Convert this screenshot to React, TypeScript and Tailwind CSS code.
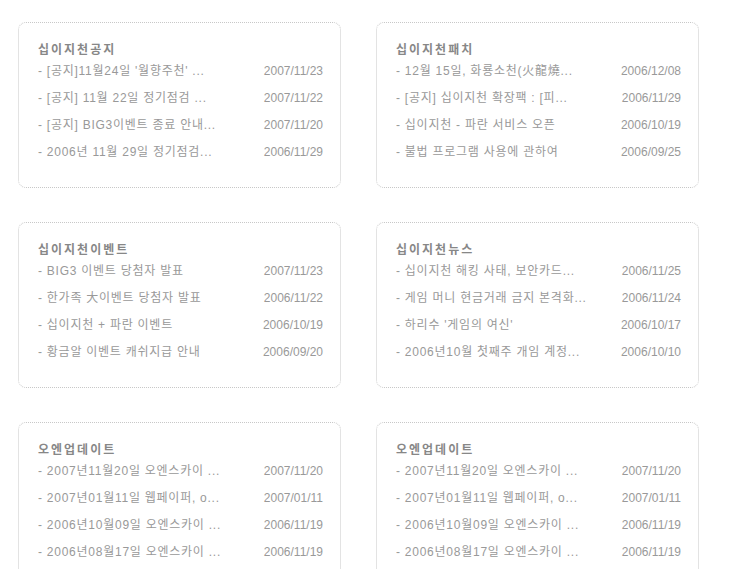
const boxes = [
  {
    title: "십이지천공지",
    items: [
      ["- [공지]11월24일 '월향주천' ...", "2007/11/23"],
      ["- [공지] 11월 22일 정기점검 ...", "2007/11/22"],
      ["- [공지] BIG3이벤트 종료 안내...", "2007/11/20"],
      ["- 2006년 11월 29일 정기점검...", "2006/11/29"],
    ],
  },
  {
    title: "십이지천패치",
    items: [
      ["- 12월 15일, 화룡소천(火龍燒...", "2006/12/08"],
      ["- [공지] 십이지천 확장팩 : [피...", "2006/11/29"],
      ["- 십이지천 - 파란 서비스 오픈", "2006/10/19"],
      ["- 불법 프로그램 사용에 관하여", "2006/09/25"],
    ],
  },
  {
    title: "십이지천이벤트",
    items: [
      ["- BIG3 이벤트 당첨자 발표", "2007/11/23"],
      ["- 한가족 大이벤트 당첨자 발표", "2006/11/22"],
      ["- 십이지천 + 파란 이벤트", "2006/10/19"],
      ["- 황금알 이벤트 캐쉬지급 안내", "2006/09/20"],
    ],
  },
  {
    title: "십이지천뉴스",
    items: [
      ["- 십이지천 해킹 사태, 보안카드...", "2006/11/25"],
      ["- 게임 머니 현금거래 금지 본격화...", "2006/11/24"],
      ["- 하리수 '게임의 여신'", "2006/10/17"],
      ["- 2006년10월 첫째주 개임 계정...", "2006/10/10"],
    ],
  },
  {
    title: "오엔업데이트",
    items: [
      ["- 2007년11월20일 오엔스카이 ...", "2007/11/20"],
      ["- 2007년01월11일 웹페이퍼, o...", "2007/01/11"],
      ["- 2006년10월09일 오엔스카이 ...", "2006/11/19"],
      ["- 2006년08월17일 오엔스카이 ...", "2006/11/19"],
    ],
  },
  {
    title: "오엔업데이트",
    items: [
      ["- 2007년11월20일 오엔스카이 ...", "2007/11/20"],
      ["- 2007년01월11일 웹페이퍼, o...", "2007/01/11"],
      ["- 2006년10월09일 오엔스카이 ...", "2006/11/19"],
      ["- 2006년08월17일 오엔스카이 ...", "2006/11/19"],
    ],
  },
];

function NewsBox({ title, items }: { title: string; items: string[][] }) {
  return (
    <div className="h-[166px] rounded-lg border border-dotted border-[#c8c8c8] bg-white pt-[21px] pr-[17px] pl-[19px]">
      <h3 className="h-[13px] text-[12px] leading-[13px] font-bold tracking-[2px] text-[#878787]">
        {title}
      </h3>
      <ul>
        {items.map(([text, date], i) => (
          <li
            key={i}
            className="flex h-[27px] items-center justify-between text-[12px] text-[#999999]"
          >
            <span className="truncate tracking-[0.75px]">{text}</span>
            <span className="shrink-0 pl-2">{date}</span>
          </li>
        ))}
      </ul>
    </div>
  );
}

export default function App() {
  return (
    <div className="h-[569px] w-[730px] overflow-hidden bg-white font-['Liberation_Sans','Noto_Sans_CJK_KR',sans-serif]">
      <div className="grid grid-cols-[323px_323px] gap-x-[35px] gap-y-[34px] pt-[22px] pl-[18px]">
        {boxes.map((b, i) => (
          <NewsBox key={i} title={b.title} items={b.items} />
        ))}
      </div>
    </div>
  );
}
